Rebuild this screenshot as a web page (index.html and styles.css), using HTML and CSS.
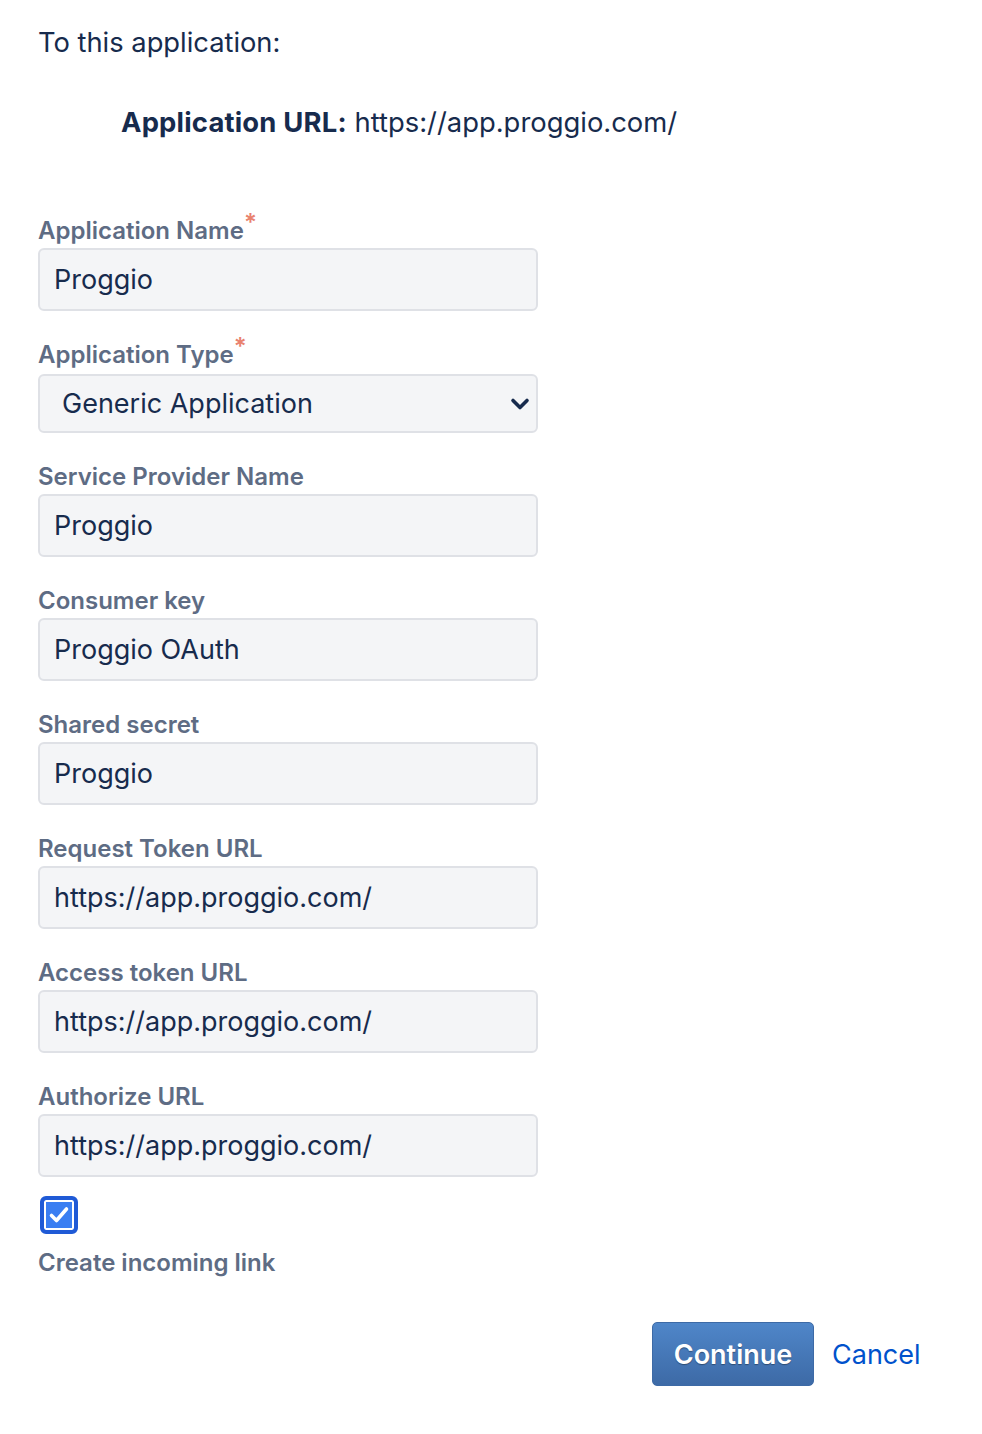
FILE: index.html
```html
<!DOCTYPE html>
<html>
<head>
<meta charset="utf-8">
<link rel="stylesheet" href="styles.css">
</head>
<body>
<div class="page">
  <p class="intro">To this application:</p>
  <p class="appurl"><strong>Application URL:</strong> https://app.proggio.com/</p>
  <form class="form">
    <div class="field">
      <label class="label">Application Name<span class="req">*</span></label>
      <div class="input">Proggio</div>
    </div>
    <div class="field">
      <label class="label">Application Type<span class="req">*</span></label>
      <div class="select"><span>Generic Application</span>
        <svg class="chev" width="20" height="14" viewBox="0 0 20 14"><path d="M3 3.5 L10 10.5 L17 3.5" fill="none" stroke="#172b4d" stroke-width="3.6" stroke-linecap="round" stroke-linejoin="round"/></svg>
      </div>
    </div>
    <div class="field">
      <label class="label">Service Provider Name</label>
      <div class="input">Proggio</div>
    </div>
    <div class="field">
      <label class="label">Consumer key</label>
      <div class="input">Proggio OAuth</div>
    </div>
    <div class="field">
      <label class="label">Shared secret</label>
      <div class="input">Proggio</div>
    </div>
    <div class="field">
      <label class="label">Request Token URL</label>
      <div class="input">https://app.proggio.com/</div>
    </div>
    <div class="field">
      <label class="label">Access token URL</label>
      <div class="input">https://app.proggio.com/</div>
    </div>
    <div class="field">
      <label class="label">Authorize URL</label>
      <div class="input">https://app.proggio.com/</div>
    </div>
    <div class="check">
      <span class="box"><svg width="26" height="26" viewBox="0 0 26 26"><path d="M5.5 13.5 L10.5 18.5 L20.5 7" fill="none" stroke="#fff" stroke-width="3.6" stroke-linecap="round" stroke-linejoin="round"/></svg></span>
    </div>
    <div class="checklabel">Create incoming link</div>
    <div class="actions">
      <button type="button" class="btn">Continue</button>
      <a class="cancel">Cancel</a>
    </div>
  </form>
</div>
</body>
</html>
```
FILE: styles.css
```css
html, body {
  margin: 0;
  padding: 0;
  background: #ffffff;
}
body {
  font-family: Inter, "Noto Sans", "Liberation Sans", sans-serif;
  color: #172b4d;
}
.page {
  padding: 24px 0 0 38px;
}
.intro {
  margin: 0;
  font-size: 27.3px;
  line-height: 36px;
  padding-top: 1px;
}
.appurl {
  margin: 43px 0 0 83px;
  font-size: 27.4px;
  line-height: 36px;
}
.appurl strong {
  font-weight: 700;
  letter-spacing: 0.2px;
}
.form {
  margin-top: 74px;
  width: 500px;
}
.field {
  margin-bottom: 27px;
}
.label {
  display: block;
  font-size: 24px;
  line-height: 34px;
  font-weight: 600;
  color: #5e6c84;
}
.req {
  color: #e2593f;
  font-size: 24px;
  line-height: 0;
  position: relative;
  top: -8px;
  margin-left: 0;
  opacity: 0.75;
}
.input, .select {
  box-sizing: border-box;
  height: 63px;
  border: 2px solid #dfe1e6;
  border-radius: 6px;
  background: #f4f5f7;
  font-size: 27px;
  padding: 0 14px;
  display: flex;
  align-items: center;
  color: #172b4d;
}
.select {
  height: 59px;
  margin-top: 2px;
  padding: 0 6px 0 22px;
  justify-content: space-between;
}
.check {
  margin-top: -8px;
  padding-left: 2px;
}
.box {
  box-sizing: border-box;
  width: 38px;
  height: 38px;
  display: flex;
  align-items: center;
  justify-content: center;
  border: 4px solid #1f5ad6;
  border-radius: 6px;
  background: #3a7ef2;
  box-shadow: inset 0 0 0 2px #ffffff;
}
.checklabel {
  margin-top: 12px;
  font-size: 24px;
  line-height: 34px;
  font-weight: 600;
  color: #5e6c84;
}
.actions {
  display: flex;
  align-items: center;
  margin-top: 42px;
  margin-left: 614px;
  width: 300px;
}
.btn {
  width: 162px;
  height: 64px;
  border: 1px solid #3d6aa6;
  border-radius: 5px;
  background: linear-gradient(#4f86c9, #3d6aa6);
  color: #ffffff;
  font-family: inherit;
  font-size: 27px;
  font-weight: 600;
  text-shadow: 0 1px 1px rgba(0,0,0,0.35);
  padding: 0;
}
.cancel {
  margin-left: 18px;
  font-size: 27px;
  color: #0052cc;
}
```
